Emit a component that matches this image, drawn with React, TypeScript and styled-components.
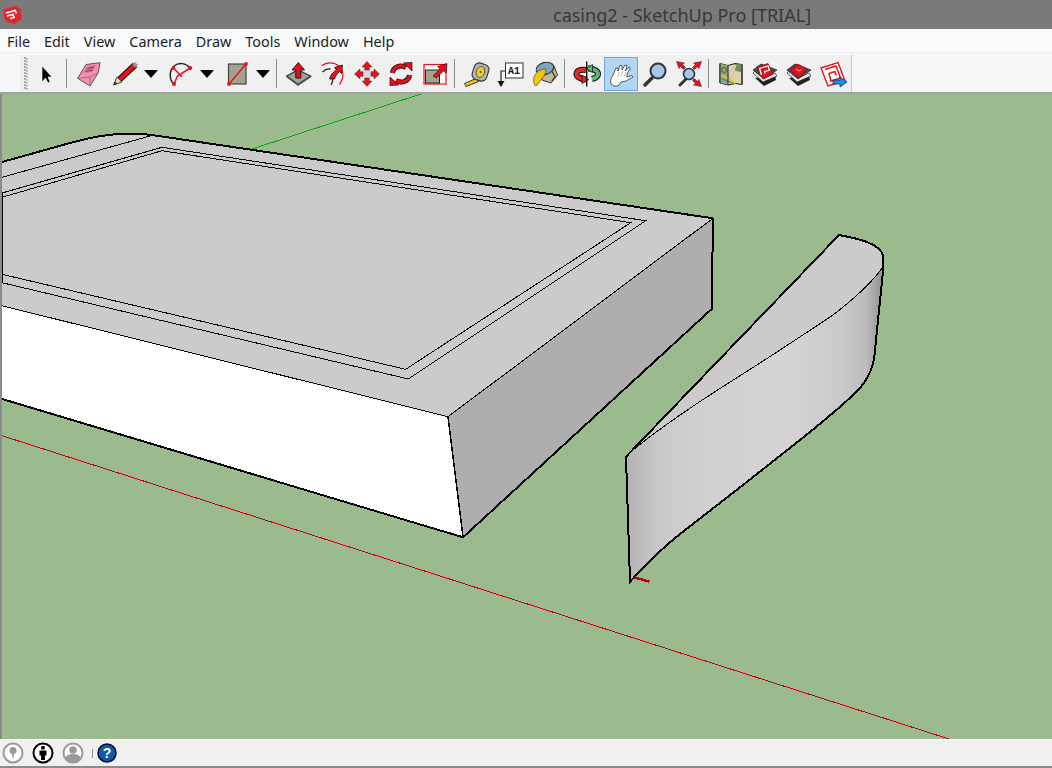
import React from "react";
import styled, { createGlobalStyle } from "styled-components";

const GlobalStyle = createGlobalStyle`
  html, body { margin: 0; padding: 0; background: #f0f0f0; }
  #root { width: 1052px; height: 768px; overflow: hidden; }
`;

const Shell = styled.div`
  display: flex;
  flex-direction: column;
  width: 1052px;
  height: 768px;
  font-family: "Noto Sans", "Open Sans", sans-serif;
`;

const TitleBar = styled.div`
  display: flex;
  align-items: center;
  flex: 0 0 29px;
  padding-left: 2px;
  background: #7a7a7a;
`;

const AppLogo = styled.svg`
  width: 20px;
  height: 20px;
  margin-top: 1px;
`;

const WindowTitle = styled.div`
  margin-left: 531px;
  margin-top: 1px;
  font-size: 18px;
  color: #383838;
  white-space: nowrap;
`;

const MenuBar = styled.nav`
  display: flex;
  align-items: center;
  gap: 14px;
  flex: 0 0 23px;
  box-sizing: border-box;
  padding: 2px 0 0 7px;
  background: #f8f9fb;
`;

const MenuItem = styled.span`
  font-size: 14.4px;
  color: #1c1c1c;
`;

const ToolRow = styled.div`
  flex: 0 0 42px;
  box-sizing: border-box;
  padding: 2px 0 0 20px;
  background: #f6f7f9;
  border-top: 1px solid #eeeeee;
  border-bottom: 2px solid #a2a2a2;
`;

const ToolStrip = styled.div`
  display: flex;
  align-items: center;
  box-sizing: border-box;
  width: 832px;
  height: 37px;
  background: #f0f0f0;
  border-right: 1px solid #c8c8c8;
`;

const Grip = styled.div`
  flex: 0 0 10px;
  align-self: stretch;
  margin: 2px 0;
  background-image:
    radial-gradient(circle at 1px 1px, #a8a8a8 1px, transparent 1.2px),
    radial-gradient(circle at 1px 1px, #c0c0c0 1px, transparent 1.2px);
  background-size: 3px 3px, 3px 3px;
  background-position: 4px 0, 6px 1px;
  background-repeat: repeat-y, repeat-y;
`;

const Tool = styled.div<{ $width?: number; $active?: boolean }>`
  display: flex;
  align-items: center;
  justify-content: center;
  flex: 0 0 ${(p) => p.$width ?? 34}px;
  height: 34px;
  box-sizing: border-box;
  background: ${(p) => (p.$active ? "#b3d5f4" : "transparent")};
  border: 1px solid ${(p) => (p.$active ? "#69a7e6" : "transparent")};
  padding-left: ${(p) => (p.$width ? p.$width - 34 : 0)}px;
`;

const ToolSep = styled.div<{ $flush?: boolean }>`
  flex: 0 0 1px;
  height: 29px;
  margin: 0 5px 0 ${(p) => (p.$flush ? 0 : 2)}px;
  background: #8e8e8e;
`;

const DropCaret = styled.div`
  flex: 0 0 22px;
  display: flex;
  justify-content: center;
  padding-right: 4px;
  box-sizing: border-box;

  &::before {
    content: "";
    border-left: 7px solid transparent;
    border-right: 7px solid transparent;
    border-top: 8px solid #000;
  }
`;

const Glyph = styled.svg`
  flex: none;
  width: 30px;
  height: 30px;
  overflow: visible;
`;

const Viewport = styled.main`
  flex: 0 0 645px;
  box-sizing: border-box;
  border-left: 2px solid #8b8b8b;
  background: #9bbb8f;
`;

const Scene = styled.svg`
  display: block;
  width: 1050px;
  height: 645px;
`;

const StatusBar = styled.footer`
  display: flex;
  align-items: center;
  gap: 4px;
  flex: 0 0 29px;
  box-sizing: border-box;
  background: #f0f0f0;
  border-top: 1px solid #ffffff;
  border-bottom: 2px solid #8a8a8a;
`;

const StatusIcon = styled.svg`
  flex: none;
  width: 26px;
  height: 26px;
`;

const StatusSep = styled.div`
  flex: 0 0 1px;
  height: 9px;
  margin-left: 2px;
  background: #8e8e8e;
`;

const HelpIcon = styled.svg`
  flex: none;
  width: 20px;
  height: 20px;
`;

const Red = "#e8101c";

const SelectIcon = () => (
  <Glyph viewBox="0 0 30 30">
    <path d="M10 7v16l3.500-4 2.500 5 2-1-2-5h4z" fill="#000" stroke="#fff" strokeWidth="0.600" />
  </Glyph>
);

const EraserIcon = () => (
  <Glyph viewBox="0 0 30 30">
    <path d="M12 5.500 26 3.700l-1.700 10L16 27 3.700 19.300z" fill="#f590b2" stroke="#555" strokeWidth="1" />
    <path d="M3.700 19.300 16 18l8.300-4.300" fill="none" stroke="#a85a78" strokeWidth="0.800" />
    <path d="M16 18v9" stroke="#a85a78" strokeWidth="0.800" />
    <path d="M9 14l4-6.500 9-1.500-4 7z" fill="#e0708f" />
    <path d="M11.500 12.500l7.500-1.500M13.500 9.500l6.500-1.500" stroke="#7a3a50" strokeWidth="1" />
  </Glyph>
);

const PencilIcon = () => (
  <Glyph viewBox="0 0 30 30">
    <path d="M9.500 20.500 25 6" stroke="#111" strokeWidth="6.400" />
    <path d="M9.500 20.500 25 6" stroke={Red} strokeWidth="4" />
    <path d="M3.500 26 7 18l5 5z" fill="#e8d7a8" stroke="#222" strokeWidth="0.800" />
    <path d="M3.500 26 5 22.500l2 2z" fill="#222" />
    <path d="M24 7l2.500-2.500" stroke="#999" strokeWidth="4.500" />
  </Glyph>
);

const ArcIcon = () => (
  <Glyph viewBox="0 0 30 30">
    <path d="M8 25C3 21 3 12 8 7c5-4 12-3 16 2" fill="none" stroke="#222" strokeWidth="1.400" />
    <path d="M24.300 9 11.500 17 8 25M7.500 9 16 18" fill="none" stroke={Red} strokeWidth="1.500" />
    <circle cx="24.300" cy="9" r="2" fill={Red} />
    <circle cx="8" cy="25" r="2" fill={Red} />
    <circle cx="7.500" cy="9" r="1.800" fill={Red} />
  </Glyph>
);

const RectIcon = () => (
  <Glyph viewBox="0 0 30 30">
    <rect x="6.500" y="5" width="17.500" height="20" fill="#a3a38b" stroke="#444" strokeWidth="1.200" />
    <path d="M7 25 24 5" stroke={Red} strokeWidth="1.400" />
    <circle cx="7" cy="25" r="1.900" fill={Red} />
    <circle cx="24" cy="5" r="1.900" fill={Red} />
  </Glyph>
);

const PushPullIcon = () => (
  <Glyph viewBox="0 0 30 30">
    <path d="M2.700 17 14 11l12.700 6L14 25.500z" fill="#a3a38b" stroke="#333" strokeWidth="1.200" />
    <path d="M2.700 17v1.500L14 27l12.700-8.500V17L14 25.500z" fill="#555" />
    <path d="M14.300 3.500 20.500 11h-3.700v8h-5V11H8z" fill={Red} stroke="#111" strokeWidth="0.900" />
  </Glyph>
);

const FollowMeIcon = () => (
  <Glyph viewBox="0 0 30 30">
    <path d="M3.700 6.500C10 2 20 3 24 11c2 5 0 11-2.500 14.500" fill="none" stroke={Red} strokeWidth="1.300" />
    <path d="M4.500 13c3-3 5-3.500 8-3" fill="none" stroke="#222" strokeWidth="1.300" />
    <path d="M13 26c2-3 2-6 1-9" fill="none" stroke="#222" strokeWidth="1.300" />
    <path d="M11.500 20c1-4 3.500-7 7-9l-2-2.500 8-2.500-1 8.500-2-2c-2 2-4 4-5 7.500z" fill={Red} stroke="#111" strokeWidth="0.800" />
  </Glyph>
);

const MoveIcon = () => (
  <Glyph viewBox="0 0 30 30">
    <rect x="11" y="11" width="8" height="8" fill="#d8d8d8" />
    <path d="M15 2.500 20 8h-2.700v3h-4.600V8H10zM15 27.500 20 22h-2.700v-3h-4.600v3H10zM2.500 15 8 10v2.700h3v4.600H8V20zM27.500 15 22 10v2.700h-3v4.600h3V20z" fill={Red} stroke="#333" strokeWidth="0.500" />
  </Glyph>
);

const RotateHalf = () => (
  <>
    <path d="M6.500 14C7 8 14 5 20 8.500" fill="none" stroke="#111" strokeWidth="5" />
    <path d="M6.500 14C7 8 14 5 20 8.500" fill="none" stroke={Red} strokeWidth="3.200" />
    <path d="M17.500 4 26 3.500V12z" fill={Red} stroke="#111" strokeWidth="0.700" />
  </>
);

const RotateIcon = () => (
  <Glyph viewBox="0 0 30 30">
    <RotateHalf />
    <g transform="rotate(180 15 15)">
      <RotateHalf />
    </g>
  </Glyph>
);

const ScaleIcon = () => (
  <Glyph viewBox="0 0 30 30">
    <rect x="4" y="5.500" width="22" height="19.500" fill="#fff" stroke={Red} strokeWidth="1.200" />
    <rect x="5.500" y="11" width="14" height="13" fill="#a3a38b" stroke="#222" strokeWidth="1" />
    <path d="M13 17 20 10l-2.500-2.500L27 4.500 26 14l-2.500-2-7 7z" fill={Red} stroke="#111" strokeWidth="0.600" />
  </Glyph>
);

const TapeIcon = () => (
  <Glyph viewBox="0 0 30 30">
    <path d="M2.500 24.500 14 19.500l2.500 3L4 27.500z" fill="#f0c419" stroke="#222" strokeWidth="0.900" />
    <rect x="11" y="4.500" width="15" height="17" rx="5" transform="rotate(18 18.500 13)" fill="#b5b5b0" stroke="#333" strokeWidth="1.100" />
    <ellipse cx="18.500" cy="13" rx="4.200" ry="5.600" transform="rotate(18 18.500 13)" fill="#f3cc20" stroke="#444" strokeWidth="0.800" />
    <circle cx="18.500" cy="13" r="1" fill="#333" />
  </Glyph>
);

const TextLabel = styled.text`
  font-family: "Liberation Mono", monospace;
  font-size: 10px;
  font-weight: 700;
  fill: #111;
`;

const TextIcon = () => (
  <Glyph viewBox="0 0 30 30">
    <rect x="9.500" y="4" width="17.500" height="15" fill="#fff" stroke="#333" strokeWidth="1" />
    <TextLabel x="12" y="15">A1</TextLabel>
    <path d="M9.500 12H5v13" fill="none" stroke="#222" strokeWidth="1.200" />
    <path d="M1.500 22h7L5 28z" fill="#111" />
  </Glyph>
);

const PaintIcon = () => (
  <Glyph viewBox="0 0 30 30">
    <path d="M10 8 24 7l3.500 9-6.500 8-9-3z" fill="#c5b98f" stroke="#333" strokeWidth="1" />
    <ellipse cx="15" cy="9.500" rx="9" ry="6" transform="rotate(-15 15 9.500)" fill="#7fa6bc" stroke="#333" strokeWidth="1.200" />
    <path d="M16 10c-6 0-10 3-12 8-1 4 0 8 2 9 2-2 3-4 5-6 3-3 5-7 5-11z" fill="#f2c313" stroke="#5a4a00" strokeWidth="0.700" />
    <path d="M22 12l3 6-3 4" fill="none" stroke="#444" strokeWidth="1.500" />
  </Glyph>
);

const OrbitIcon = () => (
  <Glyph viewBox="0 0 30 30">
    <path d="M14 11C8 10 4.500 12 4.500 15c0 3 4 5 9 5.500" fill="none" stroke="#111" strokeWidth="6" />
    <path d="M14 11C8 10 4.500 12 4.500 15c0 3 4 5 9 5.500" fill="none" stroke="#e22b2b" strokeWidth="4" />
    <path d="M16 9.500c6 0 10 2.500 10 5.500 0 2-2 4-6 5" fill="none" stroke="#111" strokeWidth="6" />
    <path d="M16 9.500c6 0 10 2.500 10 5.500 0 2-2 4-6 5" fill="none" stroke="#5dbb78" strokeWidth="4" />
    <path d="M10 16l6.500 4.500-6.500 4z" fill="#e22b2b" stroke="#111" strokeWidth="0.700" />
    <path d="M20.500 5.500l-6.500 4 6.500 4z" fill="#5dbb78" stroke="#111" strokeWidth="0.700" />
    <path d="M14.700 2.500v25" stroke="#111" strokeWidth="1.400" />
  </Glyph>
);

const HandIcon = () => (
  <Glyph viewBox="0 0 30 30">
    <path d="M5 25c-1-3 0-6 2-9l3-7h2v3l2-5.500h2V11l3-5 2 .5-1.500 5.500 3.500-4 1.500 1-3.500 6v3l5-1.500 1 1.500-7 4-5 1-3 4H8z" fill="#fff" stroke="#333" strokeWidth="0.800" />
    <path d="M13 13l-1 5M17 12l-2 5M20 13l-2 4" stroke="#999" strokeWidth="0.700" />
  </Glyph>
);

const ZoomIcon = () => (
  <Glyph viewBox="0 0 30 30">
    <path d="M5 26l7-7" stroke="#333" strokeWidth="3.500" strokeLinecap="round" />
    <circle cx="18" cy="12" r="7.500" fill="#a5c6e8" stroke="#333" strokeWidth="2" />
  </Glyph>
);

const ZoomExtentsIcon = () => (
  <Glyph viewBox="0 0 30 30">
    <path d="M6 26l6-6" stroke="#333" strokeWidth="3" strokeLinecap="round" />
    <circle cx="15" cy="15" r="5.500" fill="#a5c6e8" stroke="#333" strokeWidth="1.600" />
    <path d="M2.500 2.500l8 1.500-2 1.500 3 3-2 2-3-3L5 9.500zM27.500 2.500l-8 1.500 2 1.500-3 3 2 2 3-3L25 9.500zM27.500 27.500l-8-1.500 2-1.500-3-3 2-2 3 3 1.500-2z" fill={Red} stroke="#222" strokeWidth="0.500" />
  </Glyph>
);

const MapIcon = () => (
  <Glyph viewBox="0 0 30 30">
    <path d="M4 4.500l8 2 7-2 7 1v20l-7-1-7 1.500-8-2z" fill="#ded2a8" stroke="#222" strokeWidth="1" />
    <path d="M4 4.500l8 2v19l-8-1.500z" fill="#8fa878" />
    <path d="M19 5l7 .500v8l-7-2z" fill="#6f8f5c" />
    <path d="M12 18l7-12h2l-7 13z" fill="#f5efd5" stroke="#666" strokeWidth="0.400" />
    <path d="M5 16l8 4 6 5" fill="none" stroke="#e8c320" strokeWidth="1.800" />
    <path d="M6 20l6 2 6 3" fill="none" stroke="#5878a8" strokeWidth="1.200" />
    <circle cx="8" cy="11" r="2.500" fill="none" stroke="#555" strokeWidth="1" />
    <path d="M4 4.500v19.500M12 6.500v19M26 5.500v20" stroke="#222" strokeWidth="1" />
  </Glyph>
);

const Stack = () => (
  <>
    <path d="M5 19 14 27l12-6-1-6z" fill="#222" />
    <path d="M3 14l10 9 14-6-2-3-11 5L5 12z" fill="#e8e8e8" stroke="#222" strokeWidth="0.700" />
    <path d="M3 11l8-6 16 6-13 9z" fill="#4a4a4a" stroke="#222" strokeWidth="0.700" />
  </>
);

const WarehouseIcon = () => (
  <Glyph viewBox="0 0 30 30">
    <Stack />
    <path d="M7 8l11-3.500 5 10.500-10 5z" fill="#d8141f" stroke="#800" strokeWidth="0.600" />
    <path d="M11.500 16l-2-6.500 8.500-2.500 1.500 4-5 1.700.5 2" fill="none" stroke="#fff" strokeWidth="1.300" />
  </Glyph>
);

const ExtensionIcon = () => (
  <Glyph viewBox="0 0 30 30">
    <Stack />
    <path d="M6 11l8-6 9 5-8 9z" fill="#d8141f" stroke="#800" strokeWidth="0.600" />
    <path d="M12 10l3 2 3-1.500" fill="none" stroke="#f4a0a8" strokeWidth="1" />
  </Glyph>
);

const ShareIcon = () => (
  <Glyph viewBox="0 0 30 30">
    <path d="M3 9 20 3.500 27 22 10 27z" fill="#fff" stroke={Red} strokeWidth="1.400" />
    <path d="M7 10.500l11-3.500 4.500 12-9.500 3-2-7.500 6-2 1.300 4" fill="none" stroke={Red} strokeWidth="1.500" />
    <path d="M15 21h7v-3l7 5-7 5v-3h-7z" fill="#1a8cf0" stroke="#123" strokeWidth="0.700" />
  </Glyph>
);

const Logo = () => (
  <AppLogo viewBox="0 0 20 20">
    <path d="M1.500 4.500 13 1l5.500 3 1 10-7 5-8.500-2.500L2 12z" fill="#e3252e" />
    <path d="M4 8l9-2.500 1.500 3M5 11l6-1.500 1 3-4 1" fill="none" stroke="#fff" strokeWidth="1.700" />
  </AppLogo>
);

const casingFill =
  "M2 162L70 143C95 136 115 133 133 133.700L150 134.700L713 218.300L448 416.700L2 305.700Z";
const casingProfile =
  "M2 162L70 143C95 136 115 133 133 133.700L150 134.700L713 218.300";
const scoopOutline =
  "M626 456.700L839 235C855 238 883 243 883.300 258L883.300 268C881 290 878 320 875 350C874 368 868 378 860 388C845 404 820 424 800 440L743 485L680 534C660 550 645 565 630 581.700Z";
const scoopSeamCurve =
  "C660 428 700 401 733.300 380C770 357 800 337 833 315C850 302 870 285 882.700 267.300";
const scoopTop = `M626 456.700L839 235C855 238 883 243 883.300 258L882.700 267.300C870 285 850 302 833 315C800 337 770 357 733.300 380C700 401 660 428 633 450Z`;

const SketchScene = () => (
  <Scene viewBox="2 94 1050 645" shapeRendering="crispEdges">
    <defs>
      <linearGradient id="scoopShade" gradientUnits="userSpaceOnUse" x1="626" y1="0" x2="884" y2="0">
        <stop offset="0" stopColor="#b2b2b2" />
        <stop offset="0.12" stopColor="#c8c8c8" />
        <stop offset="0.3" stopColor="#d0d0d0" />
        <stop offset="0.62" stopColor="#d4d4d4" />
        <stop offset="0.82" stopColor="#cbcbcb" />
        <stop offset="0.93" stopColor="#bcbcbc" />
        <stop offset="1" stopColor="#8e8e8e" />
      </linearGradient>
    </defs>

    <line x1="252" y1="149" x2="424" y2="93" stroke="#0fa30f" strokeWidth="1" />
    <line x1="2" y1="435.700" x2="949" y2="739" stroke="#c8000c" strokeWidth="1" />

    <path d={casingFill} fill="#cbcbcb" />
    <polygon points="713,218.300 448,416.700 463,537.300 711.700,309" fill="#aeaeae" />
    <polygon points="2,305.700 448,416.700 463,537.300 2,399" fill="#ffffff" />

    <polyline points="2,177.300 150,136" fill="none" stroke="#000" />
    <polygon points="2,193 162,147.300 645.700,220.700 408.300,379 2,282.700" fill="none" stroke="#000" />
    <polygon points="2,197.300 162,150.700 630.700,222.700 405.700,369.300 2,274.300" fill="none" stroke="#000" />
    <polyline points="2,305.700 448,416.700 713,218.300" fill="none" stroke="#000" />
    <line x1="448" y1="416.700" x2="463" y2="537.300" stroke="#000" strokeWidth="1.500" />
    <path d={casingProfile} fill="none" stroke="#000" strokeWidth="2" />
    <polyline points="713,218.300 711.700,309 463,537.300 2,399" fill="none" stroke="#000" strokeWidth="2" />

    <path d={scoopOutline} fill="url(#scoopShade)" />
    <path d={scoopTop} fill="#cbcbcb" />
    <path d={`M633 450${scoopSeamCurve}`} fill="none" stroke="#000" />
    <path d={scoopOutline} fill="none" stroke="#000" strokeWidth="2" />
    <line x1="634.300" y1="577.300" x2="649.300" y2="581.700" stroke="#b0000f" strokeWidth="2.500" />
  </Scene>
);

const MENU = ["File", "Edit", "View", "Camera", "Draw", "Tools", "Window", "Help"];

export default function App() {
  return (
    <Shell>
      <GlobalStyle />
      <TitleBar>
        <Logo />
        <WindowTitle>casing2 - SketchUp Pro [TRIAL]</WindowTitle>
      </TitleBar>
      <MenuBar>
        {MENU.map((m) => (
          <MenuItem key={m}>{m}</MenuItem>
        ))}
      </MenuBar>
      <ToolRow>
        <ToolStrip>
          <Grip />
          <Tool><SelectIcon /></Tool>
          <ToolSep />
          <Tool><EraserIcon /></Tool>
          <Tool $width={36}><PencilIcon /></Tool>
          <DropCaret />
          <Tool><ArcIcon /></Tool>
          <DropCaret />
          <Tool><RectIcon /></Tool>
          <DropCaret />
          <ToolSep $flush />
          <Tool><PushPullIcon /></Tool>
          <Tool><FollowMeIcon /></Tool>
          <Tool><MoveIcon /></Tool>
          <Tool><RotateIcon /></Tool>
          <Tool><ScaleIcon /></Tool>
          <ToolSep />
          <Tool><TapeIcon /></Tool>
          <Tool><TextIcon /></Tool>
          <Tool><PaintIcon /></Tool>
          <ToolSep />
          <Tool><OrbitIcon /></Tool>
          <Tool $active><HandIcon /></Tool>
          <Tool><ZoomIcon /></Tool>
          <Tool><ZoomExtentsIcon /></Tool>
          <ToolSep />
          <Tool><MapIcon /></Tool>
          <Tool><WarehouseIcon /></Tool>
          <Tool><ExtensionIcon /></Tool>
          <Tool><ShareIcon /></Tool>
        </ToolStrip>
      </ToolRow>
      <Viewport>
        <SketchScene />
      </Viewport>
      <StatusBar>
        <StatusIcon viewBox="0 0 26 26">
          <circle cx="13" cy="13" r="9.500" fill="#fff" stroke="#9a9a9a" strokeWidth="2" />
          <circle cx="13" cy="10.500" r="3.500" fill="#9a9a9a" />
          <path d="M11.500 12h3L13 20z" fill="#9a9a9a" />
        </StatusIcon>
        <StatusIcon viewBox="0 0 26 26">
          <circle cx="13" cy="13" r="9.500" fill="#fff" stroke="#000" strokeWidth="2" />
          <circle cx="13" cy="7.800" r="2" fill="#000" />
          <path d="M9.500 10.500h7v5h-1.500V20h-4v-4.500H9.500z" fill="#000" />
        </StatusIcon>
        <StatusIcon viewBox="0 0 26 26">
          <circle cx="13" cy="13" r="9.500" fill="#fff" stroke="#9a9a9a" strokeWidth="2" />
          <circle cx="13" cy="10" r="3.800" fill="#9a9a9a" />
          <path d="M5 19c1-4 4-5 8-5s7 1 8 5c-2 3-5 4-8 4s-6-1-8-4z" fill="#9a9a9a" />
        </StatusIcon>
        <StatusSep />
        <HelpIcon viewBox="0 0 20 20">
          <circle cx="10" cy="10" r="9" fill="#0f5aa8" stroke="#0a0a2a" strokeWidth="1.500" />
          <text x="10" y="15" textAnchor="middle" fontFamily="Liberation Sans, sans-serif" fontSize="14" fontWeight="700" fill="#fff">?</text>
        </HelpIcon>
      </StatusBar>
    </Shell>
  );
}
